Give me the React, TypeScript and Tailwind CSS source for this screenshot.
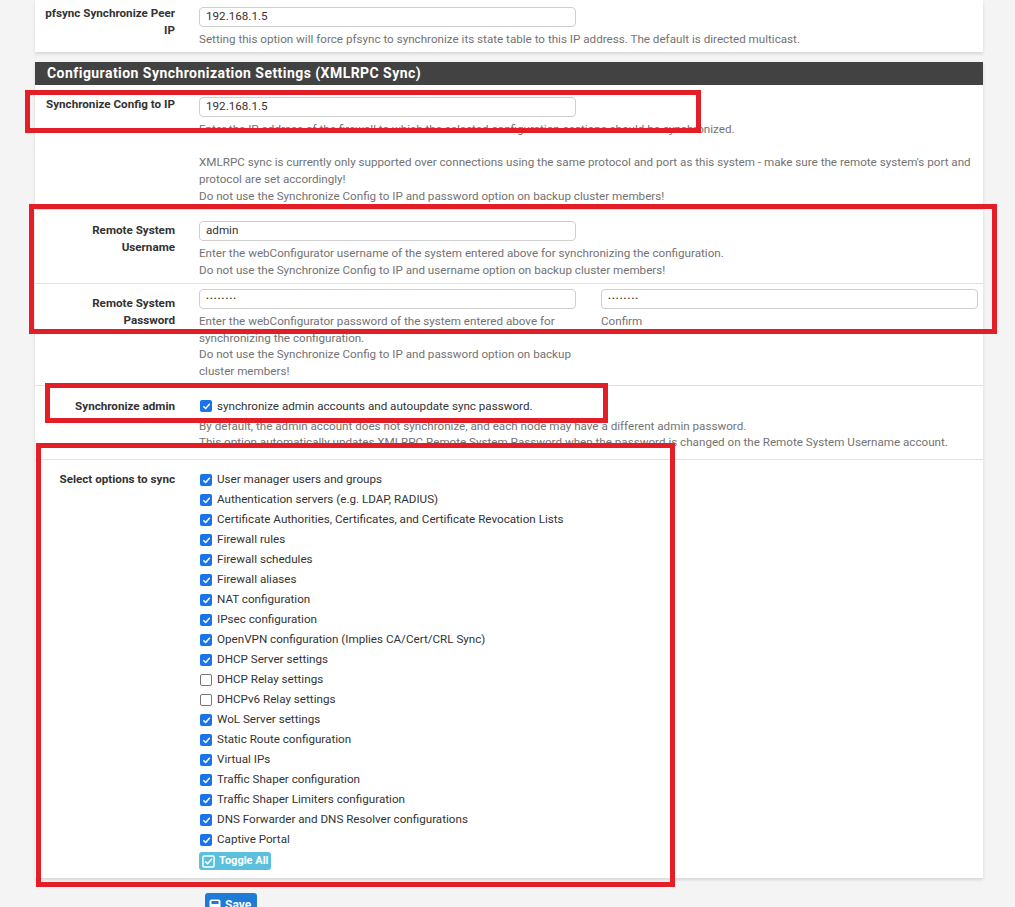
import React from "react";

const font = { fontFamily: "Roboto, 'Liberation Sans', sans-serif" };

function Check({ checked }: { checked: boolean }) {
  if (checked) {
    return (
      <span className="inline-flex h-[12px] w-[12px] shrink-0 items-center justify-center rounded-[2px] bg-[#1a73e8]">
        <svg width="9" height="9" viewBox="0 0 10 10">
          <path d="M2 5.2 L4.1 7.3 L8.2 2.6" fill="none" stroke="white" strokeWidth="1.7" strokeLinecap="round" strokeLinejoin="round" />
        </svg>
      </span>
    );
  }
  return <span className="inline-block h-[12px] w-[12px] shrink-0 rounded-[2px] border border-[#767676] bg-white" />;
}

function Input({ value, password }: { value: string; password?: boolean }) {
  return (
    <div className="flex h-[20px] w-[377px] items-center rounded-[4px] border border-[#cfcfcf] bg-white pl-[6px] text-[11.65px] text-[#333]">
      {password ? <span className="text-[8px] leading-none tracking-[1.2px]">••••••••</span> : value}
    </div>
  );
}

const help = "text-[11.65px] leading-[16.7px] text-[#737373]";
const label = "w-[152px] shrink-0 pl-[7px] pr-[12px] text-right text-[11.65px] font-bold leading-[16.7px] text-[#333]";

const items: [string, boolean][] = [
  ["User manager users and groups", true],
  ["Authentication servers (e.g. LDAP, RADIUS)", true],
  ["Certificate Authorities, Certificates, and Certificate Revocation Lists", true],
  ["Firewall rules", true],
  ["Firewall schedules", true],
  ["Firewall aliases", true],
  ["NAT configuration", true],
  ["IPsec configuration", true],
  ["OpenVPN configuration (Implies CA/Cert/CRL Sync)", true],
  ["DHCP Server settings", true],
  ["DHCP Relay settings", false],
  ["DHCPv6 Relay settings", false],
  ["WoL Server settings", true],
  ["Static Route configuration", true],
  ["Virtual IPs", true],
  ["Traffic Shaper configuration", true],
  ["Traffic Shaper Limiters configuration", true],
  ["DNS Forwarder and DNS Resolver configurations", true],
  ["Captive Portal", true],
];

function RedBox({ cls }: { cls: string }) {
  return <div className={"pointer-events-none absolute border-[5px] border-[#e41e26] " + cls} />;
}

export default function App() {
  return (
    <div style={font} className="relative h-[907px] w-[1015px] overflow-hidden bg-[#f4f4f4]">
      <div className="ml-[35px] w-[948px]">
        {/* top panel */}
        <div className="flex h-[52px] bg-white shadow-[0_2px_3px_rgba(0,0,0,0.12)]">
          <div className={label + " pt-[5px]"}>pfsync Synchronize Peer IP</div>
          <div className="ml-[12px] pt-[7px]">
            <Input value="192.168.1.5" />
            <div className={help + " mt-[4px]"}>
              Setting this option will force pfsync to synchronize its state table to this IP address. The default is directed multicast.
            </div>
          </div>
        </div>

        {/* second panel */}
        <div className="mt-[10px] bg-white shadow-[0_2px_3px_rgba(0,0,0,0.12)]">
          <div className="flex h-[23px] items-center bg-[#424242] pl-[12px] text-[14px] font-bold tracking-[0.45px] text-white">
            Configuration Synchronization Settings (XMLRPC Sync)
          </div>

          {/* config to IP */}
          <div className="flex h-[125px] border-b border-[#e2e2e2]">
            <div className={label + " pt-[11px]"}>Synchronize Config to IP</div>
            <div className="ml-[12px] w-[779px] pt-[12px]">
              <Input value="192.168.1.5" />
              <div className={help + " mt-[4px]"}>
                Enter the IP address of the firewall to which the selected configuration sections should be synchronized.
                <br />
                <br />
                XMLRPC sync is currently only supported over connections using the same protocol and port as this system - make sure the remote system's port and protocol are set accordingly!
                <br />
                Do not use the Synchronize Config to IP and password option on backup cluster members!
              </div>
            </div>
          </div>

          {/* username */}
          <div className="flex h-[74px] border-b border-[#e2e2e2]">
            <div className={label + " pt-[12px]"}>Remote System Username</div>
            <div className="ml-[12px] w-[779px] pt-[11px]">
              <Input value="admin" />
              <div className={help + " mt-[4px]"}>
                Enter the webConfigurator username of the system entered above for synchronizing the configuration.
                <br />
                Do not use the Synchronize Config to IP and username option on backup cluster members!
              </div>
            </div>
          </div>

          {/* password */}
          <div className="flex h-[102px] border-b border-[#e2e2e2]">
            <div className={label + " pt-[11px]"}>Remote System Password</div>
            <div className="ml-[12px] flex w-[779px] gap-[25px] pt-[5px]">
              <div className="w-[377px]">
                <Input value="" password />
                <div className={help + " mt-[4px]"}>
                  Enter the webConfigurator password of the system entered above for synchronizing the configuration.
                  <br />
                  Do not use the Synchronize Config to IP and password option on backup cluster members!
                </div>
              </div>
              <div className="w-[377px]">
                <Input value="" password />
                <div className={help + " mt-[4px]"}>Confirm</div>
              </div>
            </div>
          </div>

          {/* sync admin */}
          <div className="flex h-[74px] border-b border-[#e2e2e2]">
            <div className={label + " pt-[12px]"}>Synchronize admin</div>
            <div className="ml-[12px] w-[779px] pt-[12px]">
              <div className="flex h-[16.7px] items-center gap-[5px] pl-[1px] text-[11.65px] text-[#333]">
                <Check checked />
                <span>synchronize admin accounts and autoupdate sync password.</span>
              </div>
              <div className={help + " mt-[3px]"}>
                By default, the admin account does not synchronize, and each node may have a different admin password.
                <br />
                This option automatically updates XMLRPC Remote System Password when the password is changed on the Remote System Username account.
              </div>
            </div>
          </div>

          {/* options */}
          <div className="flex pb-[8px]">
            <div className={label + " pt-[11px]"}>Select options to sync</div>
            <div className="ml-[12px] flex w-[779px] flex-col items-start pt-[10px]">
              {items.map(([t, c]) => (
                <div key={t} className="flex h-[20px] items-center gap-[5px] pl-[1px] text-[11.65px] text-[#333]">
                  <Check checked={c} />
                  <span>{t}</span>
                </div>
              ))}
              <div className="mt-[2px] flex h-[18px] items-center gap-[4px] rounded-[3px] bg-[#5bc0de] pl-[3px] pr-[3px] text-[11px] font-bold text-white">
                <svg width="13" height="13" viewBox="0 0 14 14">
                  <rect x="1" y="1" width="12" height="12" rx="1.5" fill="none" stroke="white" strokeWidth="1.6" />
                  <path d="M3.8 7.2 L6 9.3 L10.3 4.6" fill="none" stroke="white" strokeWidth="1.6" strokeLinecap="round" strokeLinejoin="round" />
                </svg>
                Toggle All
              </div>
            </div>
          </div>
        </div>

        {/* save */}
        <div className="mt-[15px] flex pl-[170px]">
          <div className="flex h-[24px] w-[52px] items-center gap-[4px] rounded-[3px] bg-[#1e7bd6] pl-[4px] text-[12px] font-bold text-white">
            <svg width="12" height="12" viewBox="0 0 12 12">
              <rect x="0.5" y="0.5" width="11" height="11" rx="2" fill="white" />
              <rect x="2.5" y="2" width="7" height="3" fill="#1e7bd6" />
            </svg>
            Save
          </div>
        </div>
      </div>

      <RedBox cls="left-[25px] top-[90px] h-[43px] w-[676px]" />
      <RedBox cls="left-[29px] top-[204px] h-[130px] w-[968px]" />
      <RedBox cls="left-[45px] top-[383px] h-[40px] w-[563px]" />
      <RedBox cls="left-[36px] top-[443px] h-[444px] w-[639px]" />
    </div>
  );
}
